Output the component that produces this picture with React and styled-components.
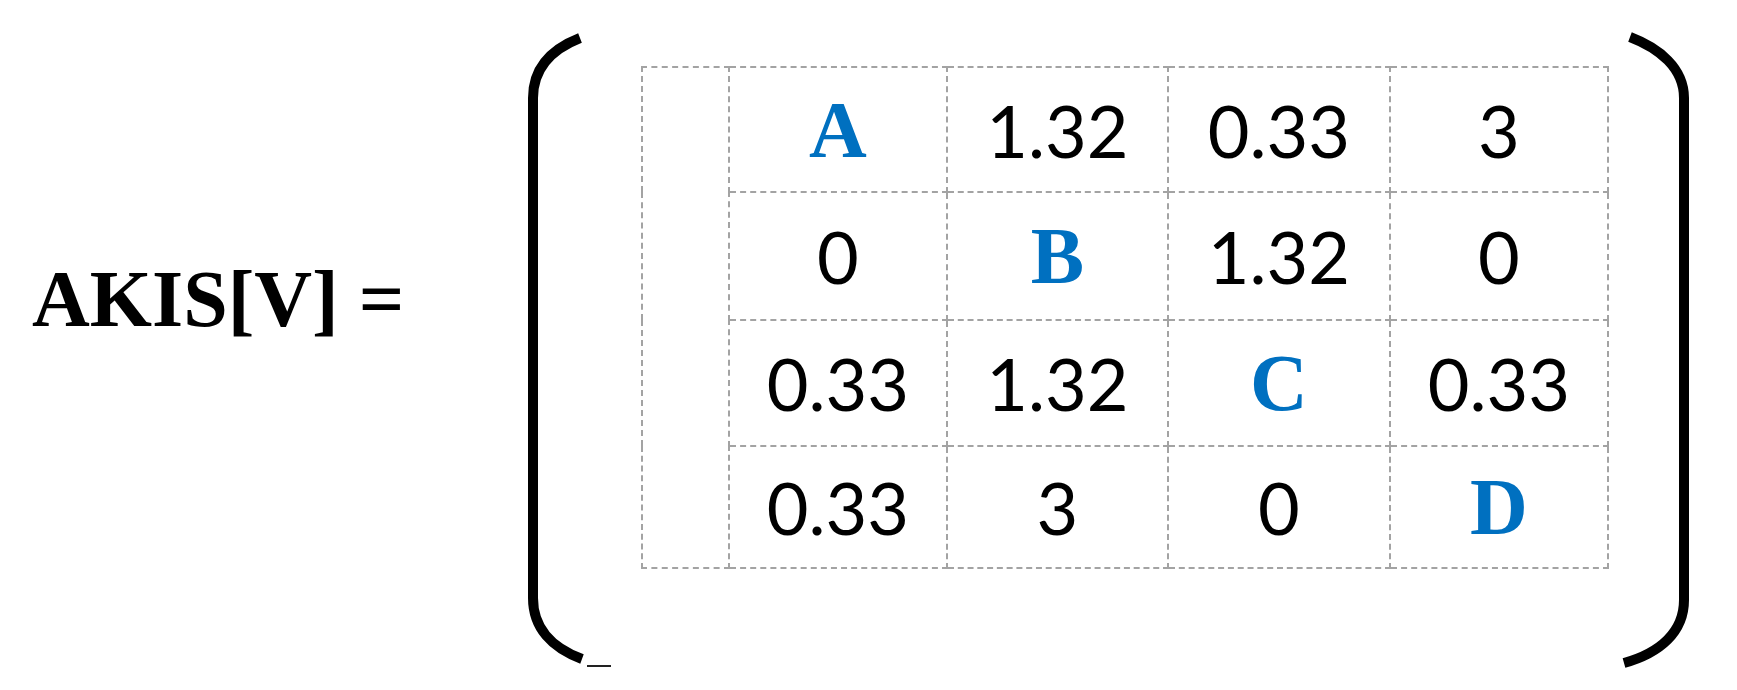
import React from 'react';
import styled, { createGlobalStyle } from 'styled-components';

const GlobalStyle = createGlobalStyle`
  html, body {
    margin: 0;
    padding: 0;
    background: #ffffff;
  }
`;

const Page = styled.div`
  display: flex;
  align-items: flex-start;
  height: 690px;
  padding-left: 32px;
  box-sizing: border-box;
  background: #ffffff;
  overflow: hidden;
`;

const Label = styled.div`
  flex-shrink: 0;
  width: 488px;
  margin-top: 259px;
  font-family: 'Liberation Serif', 'Times New Roman', serif;
  font-weight: 700;
  font-size: 80px;
  line-height: 80px;
  color: #000;
  white-space: nowrap;
`;

const Paren = styled.svg`
  display: block;
  flex-shrink: 0;
  margin-top: 30px;
  margin-left: ${props => props.$gap || 0}px;
`;

const Grid = styled.table`
  flex-shrink: 0;
  margin-top: 66px;
  margin-left: 26px;
  width: 966px;
  border-collapse: collapse;
  table-layout: fixed;
`;

const Row = styled.tr`
  height: ${props => props.$h}px;
`;

const Cell = styled.td`
  padding: 0;
  border: 2px dashed #a3a3a3;
  text-align: center;
  vertical-align: middle;
  line-height: 1;
  color: ${props => (props.$accent ? '#0070c0' : '#000')};
  font-family: ${props =>
    props.$accent
      ? "'Liberation Serif', 'Times New Roman', serif"
      : "Lato, 'DejaVu Sans', sans-serif"};
  font-weight: ${props => (props.$accent ? 700 : 400)};
  font-size: ${props => (props.$accent ? 80 : 72)}px;
`;

const colWidths = [87, 218, 221, 222, 218];
const rowHeights = [125, 128, 126, 122];

const matrix = [
  ['A', '1.32', '0.33', '3'],
  ['0', 'B', '1.32', '0'],
  ['0.33', '1.32', 'C', '0.33'],
  ['0.33', '3', '0', 'D']
];

const LeftParen = () => (
  <Paren width="95" height="645" viewBox="0 0 95 645">
    <path
      d="M60 8 C32 19 13 38 13 68 L13 568 C13 598 32 618 62 629"
      fill="none"
      stroke="#000"
      strokeWidth="10"
    />
    <line x1="67" y1="636" x2="91" y2="636" stroke="#222" strokeWidth="2" />
  </Paren>
);

const RightParen = () => (
  <Paren $gap={5} width="85" height="645" viewBox="0 0 85 645">
    <path
      d="M16 7 C45 18 70 38 70 68 L70 570 C70 602 46 623 10 633"
      fill="none"
      stroke="#000"
      strokeWidth="10"
    />
  </Paren>
);

export default function App() {
  return (
    <>
      <GlobalStyle />
      <Page>
        <Label>AKIS[V] =</Label>
        <LeftParen />
        <Grid>
          <colgroup>
            {colWidths.map((w, i) => (
              <col key={i} style={{ width: w }} />
            ))}
          </colgroup>
          <tbody>
            {matrix.map((row, r) => (
              <Row key={r} $h={rowHeights[r]}>
                {r === 0 && <Cell rowSpan={4} />}
                {row.map((v, c) => (
                  <Cell key={c} $accent={r === c}>
                    {v}
                  </Cell>
                ))}
              </Row>
            ))}
          </tbody>
        </Grid>
        <RightParen />
      </Page>
    </>
  );
}
